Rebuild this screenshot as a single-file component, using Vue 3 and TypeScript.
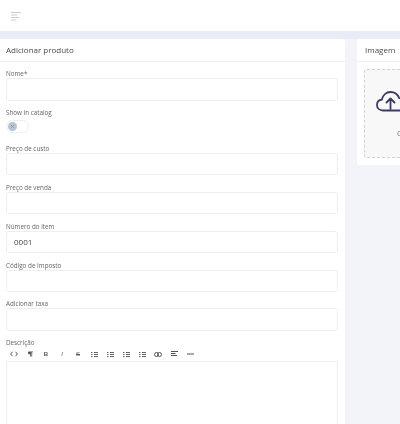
<script setup lang="ts">
const fields = [
  { label: 'Preço de custo', value: '' },
  { label: 'Preço de venda', value: '' },
  { label: 'Número do item', value: '0001' },
  { label: 'Código de Imposto', value: '' },
  { label: 'Adicionar taxa', value: '' },
]
const tools = ['code', 'para', 'B', 'I', 'S', 'ul', 'ol', 'il', 'ir', 'link', 'align', 'hr']
</script>

<template>
  <div class="page">
    <header class="topbar">
      <svg class="menu" width="12" height="10" viewBox="0 0 12 10" fill="none" stroke="#c9ccd6" stroke-width="1">
        <path d="M1 1.500H11M1 4H7M1 6.500H9M1 9H6" />
      </svg>
    </header>
    <div class="band"></div>
    <main class="content">
      <section class="card main-card">
        <h2 class="card-title">Adicionar produto</h2>
        <div class="form">
          <div class="field">
            <label>Nome*</label>
            <div class="input"></div>
          </div>
          <div class="field toggle-field">
            <label>Show in catalog</label>
            <div class="toggle"><span class="knob">×</span></div>
          </div>
          <div v-for="f in fields" :key="f.label" class="field">
            <label>{{ f.label }}</label>
            <div class="input">{{ f.value }}</div>
          </div>
          <div class="field desc">
            <label>Descrição</label>
            <div class="toolbar">
              <span v-for="t in tools" :key="t" class="tool">
                <svg v-if="t === 'code'" width="8" height="6" viewBox="0 0 8 6" fill="none" stroke="#555" stroke-width="1"><path d="M2.500 .8 .6 3l1.900 2.200M5.500 .8 7.400 3 5.500 5.200" /></svg>
                <svg v-else-if="t === 'para'" width="5" height="6" viewBox="0 0 6 6" fill="#555"><path d="M1 0h5v1H5v5H4V1H3.500v5h-1V3.200A1.700 1.700 0 0 1 1 0Z" /></svg>
                <b v-else-if="t === 'B'" class="letter">B</b>
                <i v-else-if="t === 'I'" class="letter">I</i>
                <s v-else-if="t === 'S'" class="letter">S</s>
                <svg v-else-if="t === 'link'" width="8" height="5" viewBox="0 0 8 5" fill="none" stroke="#555" stroke-width="1"><rect x=".5" y=".5" width="4" height="4" rx="2" /><rect x="3.500" y=".5" width="4" height="4" rx="2" /></svg>
                <svg v-else-if="t === 'align'" width="7" height="6" viewBox="0 0 7 6" fill="none" stroke="#555" stroke-width="1"><path d="M0 .5h7M0 2.500h4.500M0 4.500h6" /></svg>
                <svg v-else-if="t === 'hr'" width="7" height="2" viewBox="0 0 7 2" fill="none" stroke="#555" stroke-width="1"><path d="M0 1h7" /></svg>
                <svg v-else width="7" height="5" viewBox="0 0 7 5" fill="none" stroke="#666" stroke-width="1"><path d="M0 .5h1.500M3 .5h4M0 2.500h1.500M3 2.500h4M0 4.500h1.500M3 4.500h4" /></svg>
              </span>
            </div>
            <div class="editor"></div>
          </div>
        </div>
      </section>
      <section class="card side-card">
        <h2 class="card-title">Imagem</h2>
        <div class="side-body">
          <div class="drop">
            <svg class="cloud" width="40" height="26" viewBox="0 0 40 26" fill="none" stroke="#3b3a63" stroke-width="1.800" stroke-linecap="round" stroke-linejoin="round">
              <path d="M7 20.500C3.500 20.500 1 18.200 1 15c0-2.800 2-5 4.800-5.300C6.800 5 10.300 2 14.500 2c4 0 7.200 2.400 8.600 6 5 0 9 3 9 6.500 0 3.500-3 6-7 6H7Z" />
              <path d="M14.500 19V9M10.500 12.500l4-4 4 4" />
            </svg>
            <span class="drop-text">Clique</span>
          </div>
        </div>
      </section>
    </main>
  </div>
</template>

<style scoped>
.page {
  width: 400px;
  height: 424px;
  overflow: hidden;
  background: #f3f4f9;
  font-family: "Open Sans", "Liberation Sans", sans-serif;
  color: #555;
  filter: blur(0.3px);
}
.topbar {
  height: 31px;
  background: #fff;
  display: flex;
  align-items: center;
  padding-left: 10px;
  box-sizing: border-box;
}
.menu { display: block; }
.band {
  height: 8px;
  background: #e9ebf6;
}
.content {
  display: grid;
  grid-template-columns: 345px 200px;
  column-gap: 12px;
  align-items: start;
}
.card {
  background: #fff;
  border-radius: 0 3px 3px 0;
}
.side-card { border-radius: 3px; }
.card-title {
  margin: 0;
  height: 23px;
  line-height: 21px;
  padding-left: 6px;
  font-size: 8px;
  font-weight: 400;
  color: #4a4a4a;
  border-bottom: 1px solid #f0f1f5;
  box-sizing: border-box;
}
.side-card .card-title { padding-left: 8px; }
.form {
  padding: 7px 7px 0 6px;
  display: flex;
  flex-direction: column;
}
.field {
  height: 38.900px;
  display: flex;
  flex-direction: column;
}
.field label {
  display: block;
  height: 9px;
  line-height: 10px;
  font-size: 6.300px;
  color: #666;
}
.input {
  height: 22.500px;
  box-sizing: border-box;
  border: 1px solid #eceef2;
  border-radius: 3px;
  padding-left: 7px;
  line-height: 19px;
  font-size: 8px;
  color: #444;
  background: #fff;
}
.toggle-field { height: 36px; }
.toggle-field label { margin-bottom: 3px; }
.toggle {
  width: 23px;
  height: 13px;
  box-sizing: border-box;
  border: 1px solid #eceef2;
  border-radius: 7px;
  display: flex;
  align-items: center;
}
.knob {
  width: 9px;
  height: 9px;
  margin-left: 1px;
  border-radius: 50%;
  background: #b9c4d3;
  color: #8a94a6;
  font-size: 7px;
  line-height: 9px;
  text-align: center;
}
.desc { height: auto; }
.toolbar {
  height: 15px;
  box-sizing: border-box;
  display: flex;
  align-items: center;
  border-bottom: 1px solid #eceef2;
}
.tool {
  width: 16px;
  display: flex;
  justify-content: center;
  align-items: center;
  height: 100%;
}
.letter {
  font-size: 6px;
  line-height: 1;
  color: #555;
  font-family: "Liberation Sans", sans-serif;
}
.editor {
  height: 70px;
  border-left: 1px solid #eceef2;
  border-right: 1px solid #eceef2;
}
.side-body { padding: 7px 7px; }
.drop {
  height: 89px;
  width: 186px;
  box-sizing: border-box;
  border: 1px dashed #cfd1d6;
  border-radius: 3px;
  background: #f8f8f9;
  display: flex;
  flex-direction: column;
  align-items: flex-start;
  padding: 20px 0 0 11px;
}
.cloud { display: block; }
.drop-text {
  margin: 11px 0 0 21px;
  font-size: 8px;
  color: #777;
}
</style>
